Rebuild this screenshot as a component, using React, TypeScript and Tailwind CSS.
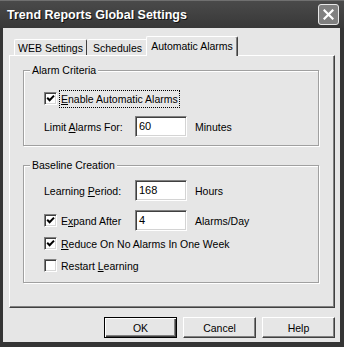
import React from 'react';

const font = "font-['Liberation_Sans',Arial,sans-serif]";

function U({ children }: { children: React.ReactNode }) {
  return <span className="underline underline-offset-[1px]">{children}</span>;
}

function Check({ checked }: { checked?: boolean }) {
  return (
    <span className="w-[13px] h-[13px] shrink-0 bg-white border border-[#808080] border-r-white border-b-white shadow-[inset_1px_1px_0_#404040,inset_-1px_-1px_0_#d8d8d8] flex items-center justify-center">
      {checked && (
        <svg width="9" height="9" viewBox="0 0 9 9">
          <path d="M1.2 3.8 L3.6 6.3 L8 1.6" fill="none" stroke="#000" strokeWidth="2" />
        </svg>
      )}
    </span>
  );
}

function Field({ value }: { value: string }) {
  return (
    <div className="w-[52px] h-[21px] shrink-0 bg-white border border-[#808080] border-r-white border-b-white shadow-[inset_1px_1px_0_#404040,inset_-1px_-1px_0_#d4d4d4] pl-[3px] pb-[2px] flex items-center text-[11px]">
      {value}
    </div>
  );
}

function Group({ title, className, children }: { title: string; className?: string; children: React.ReactNode }) {
  return (
    <div className={`relative border border-[#a0a0a0] shadow-[1px_1px_0_#fff,inset_1px_1px_0_#fff] pl-[20px] ${className ?? ''}`}>
      <span className="absolute -top-[8px] left-[6px] bg-[#e6e6e6] px-[2px] leading-[14px]">{title}</span>
      {children}
    </div>
  );
}

function Button({ label, def }: { label: string; def?: boolean }) {
  return (
    <div
      className={
        def
          ? 'w-[73px] h-[21px] border border-black shadow-[inset_1px_1px_0_#fff,inset_-1px_-1px_0_#404040,inset_-2px_-2px_0_#808080] flex items-center justify-center'
          : 'w-[73px] h-[21px] border border-white border-r-[#404040] border-b-[#404040] shadow-[inset_-1px_-1px_0_#808080] flex items-center justify-center'
      }
    >
      {label}
    </div>
  );
}

export default function App() {
  return (
    <div className={`w-[344px] h-[347px] bg-[#353535] flex flex-col text-[10.5px] leading-[14px] text-black ${font}`}>
      <div className="h-[28px] shrink-0 border-t border-[#707070] bg-gradient-to-b from-[#4a4a4a] to-[#383838] flex items-center justify-between pl-[7px] pr-[5px]">
        <span className="text-white font-bold text-[12.5px] [text-shadow:1px_1px_0_#111]">Trend Reports Global Settings</span>
        <div className="w-[21px] h-[21px] rounded-[3px] border border-[#e8e8e8] bg-[#808080] flex items-center justify-center">
          <svg width="11" height="11" viewBox="0 0 11 11">
            <path d="M1.5 1.5 L9.5 9.5 M9.5 1.5 L1.5 9.5" stroke="#fff" strokeWidth="2.2" strokeLinecap="square" />
          </svg>
        </div>
      </div>

      <div className="flex-1 ml-[3px] mr-[4px] mb-[5px] bg-[#e6e6e6] pl-[6px] pr-[5px] pt-[8px] flex flex-col">
        <div className="h-[19px] flex items-end pl-[5px]">
          <div className="w-[73px] h-[16px] border-t border-l border-white border-r border-r-[#404040] rounded-t-[2px] flex items-center justify-center pt-[1px]">
            WEB Settings
          </div>
          <div className="w-[61px] h-[16px] border-t border-white rounded-t-[2px] flex items-center justify-center pt-[1px]">
            Schedules
          </div>
          <div className="relative z-10 -ml-[2px] -mb-[1px] w-[92px] h-[20px] bg-[#e6e6e6] border-t border-l border-white border-r border-r-[#404040] shadow-[inset_-1px_0_0_#808080] rounded-t-[2px] flex items-start justify-center pt-[2px]">
            Automatic Alarms
          </div>
        </div>

        <div className="h-[253px] border border-white border-r-[#404040] border-b-[#404040] shadow-[inset_-1px_-1px_0_#808080] pl-[13px] pr-[15px] pt-[14px]">
          <Group title="Alarm Criteria" className="pt-[17px] pb-[8px]">
            <div className="h-[21px] flex items-center">
              <Check checked />
              <span className="ml-[2px] border border-dotted border-black px-[1px] py-[1px]">
                <U>E</U>nable Automatic Alarms
              </span>
            </div>
            <div className="h-[21px] mt-[7px] flex items-center">
              <span className="w-[91px]">
                Limit <U>A</U>larms For:
              </span>
              <Field value="60" />
              <span className="ml-[8px]">Minutes</span>
            </div>
          </Group>

          <Group title="Baseline Creation" className="mt-[19px] pt-[14px] pb-[6px]">
            <div className="h-[21px] flex items-center">
              <span className="w-[91px]">
                Learning <U>P</U>eriod:
              </span>
              <Field value="168" />
              <span className="ml-[8px]">Hours</span>
            </div>
            <div className="h-[21px] mt-[9px] flex items-center">
              <div className="w-[91px] flex items-center gap-[4px]">
                <Check checked />
                <span>
                  E<U>x</U>pand After
                </span>
              </div>
              <Field value="4" />
              <span className="ml-[8px]">Alarms/Day</span>
            </div>
            <div className="h-[21px] mt-[2px] flex items-center gap-[4px]">
              <Check checked />
              <span>
                <U>R</U>educe On No Alarms In One Week
              </span>
            </div>
            <div className="h-[21px] mt-[1px] flex items-center gap-[4px]">
              <Check />
              <span>
                Restart <U>L</U>earning
              </span>
            </div>
          </Group>
        </div>

        <div className="mt-[9px] flex justify-end gap-[6px]">
          <Button label="OK" def />
          <Button label="Cancel" />
          <Button label="Help" />
        </div>
      </div>
    </div>
  );
}
